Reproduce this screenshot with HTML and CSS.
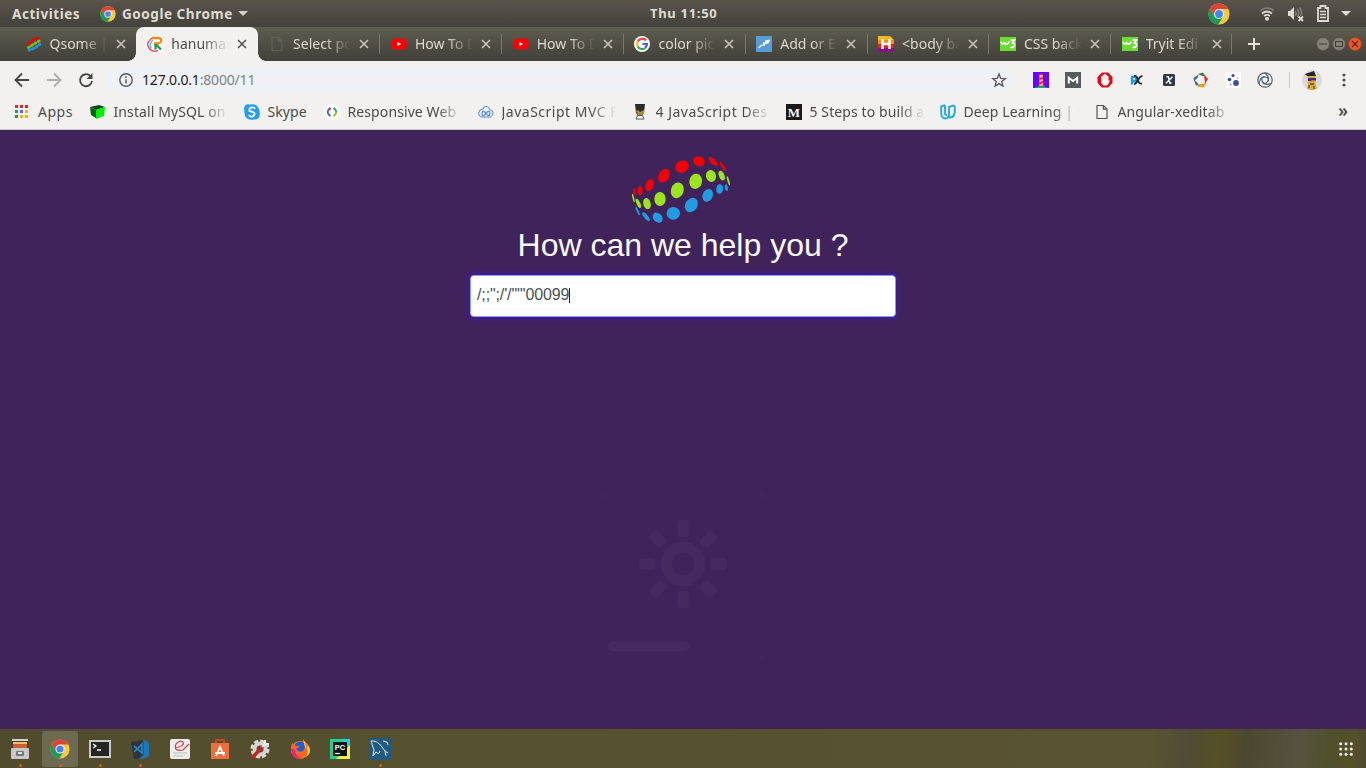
FILE: index.html
```html
<!DOCTYPE html>
<html lang="en">
<head>
<meta charset="utf-8">
<title>How can we help you ?</title>
<link rel="stylesheet" href="styles.css">
</head>
<body>
<svg class="defs" width="0" height="0">
  <symbol id="chrome" viewBox="0 0 48 48">
    <circle cx="24" cy="24" r="23" fill="#fbc940"/>
    <path d="M4 12.500A23 23 0 0 0 22.500 47L33 30 15 30Z" fill="#1a9b58"/>
    <path d="M24 13H44.200A23 23 0 0 0 4 12.500L14 29Z" fill="#dc4437"/>
    <circle cx="24" cy="24" r="11" fill="#f5f5f5"/><circle cx="24" cy="24" r="8.600" fill="#4387f4"/>
  </symbol>
  <symbol id="close" viewBox="0 0 10 10"><path d="M1 1 9 9M9 1 1 9" stroke="currentColor" stroke-width="1.6" fill="none"/></symbol>
  <symbol id="youtube" viewBox="0 0 16 16"><rect x="1" y="2.500" width="14.500" height="11" rx="2.500" fill="#f00"/><path d="M6.500 6v4l3.700-2Z" fill="#fff"/></symbol>
  <symbol id="w3" viewBox="0 0 16 16"><path d="M0 1H16V15H0Z" fill="#6bdb33"/><path d="M1 5.500c.3 3 3.300 3 3.700.5.300 3 3.300 3 4.500-.5M10.500 4.200h4L12.400 7c3.700 0 2.700 5-1.900 4.200" fill="none" stroke="#fff" stroke-width="1.700"/></symbol>
  <symbol id="page" viewBox="0 0 16 16"><path d="M3 1.500H9.500L13 5V14.500H3ZM9.300 1.500V5.200H13" fill="none" stroke="currentColor" stroke-width="1.200"/></symbol>
</svg>

<header class="topbar">
  <span class="activities">Activities</span>
  <svg class="app-icon" width="16" height="16"><use href="#chrome"/></svg>
  <span class="app-name">Google Chrome</span>
  <svg class="app-caret" width="10" height="5"><path d="M0 0H10L5 5Z" fill="#d5d1cc"/></svg>
  <span class="clock">Thu 11:50</span>
  <div class="status">
    <svg width="22" height="22"><use href="#chrome"/></svg>
    <svg class="wifi" width="16" height="15" viewBox="0 0 16 15"><g fill="none" stroke="#dfdbd2" stroke-width="1.700"><path d="M1.500 4.500Q8-.5 14.500 4.500" opacity=".35"/><path d="M3 7.500Q8 3.500 13 7.500M5 10Q8 7.800 11 10"/></g><circle cx="8" cy="12.700" r="2" fill="#dfdbd2"/></svg>
    <svg class="sound" width="18" height="16" viewBox="0 0 18 16"><path d="M1 5H3L7 1V14L3 10H1Z" fill="#dfdbd2"/><g fill="none" stroke="#dfdbd2" opacity=".4" stroke-width="1.300"><path d="M8.500 5Q10 7.500 8.500 10M10.500 3Q13 7 10.500 11M12.500 1.500Q16 6 13.500 10"/></g><path d="m11.500 10.500 4.500 4.500m0-4.500-4.500 4.500" stroke="#dfdbd2" stroke-width="1.800"/></svg>
    <svg class="battery" width="12" height="17" viewBox="0 0 12 17"><path d="M1 3H3.500V1H8.500V3H11V16H1Z" fill="none" stroke="#dfdbd2" stroke-width="1.800"/><path d="M3 6.500H9M3 9.500H9M3 12.500H9" stroke="#dfdbd2" stroke-width="1.500"/></svg>
    <svg width="10" height="5"><path d="M0 0H10L5 5Z" fill="#dfdbd2"/></svg>
  </div>
</header>

<nav class="tabs">
  <div class="tab"><svg width="16" height="16" viewBox="0 0 16 16"><g fill="none" stroke-width="3" stroke-linecap="round" stroke-dasharray="1 2.800"><path d="M2 9 6 4.500 13 2" stroke="#e00808"/><path d="M2.500 11.500 8 8 14 4.500" stroke="#76bd22"/><path d="M3 14 9 12 14 8" stroke="#2590d3"/></g></svg><span class="fade">Qsome |</span><svg class="x"><use href="#close"/></svg></div>
  <div class="tab active"><svg width="16" height="16" viewBox="0 0 16 16"><path d="M0 0H16V16H0Z" fill="#fff"/><path d="M11 14.500Q5 16.500 2 12T3 4L5 2" stroke="#e54a60" stroke-width="1.400" fill="none"/><path d="M4 12Q2 7 6 4" stroke="#63a9e0" stroke-width="1.300" fill="none"/><path d="M5 2H11.500C15.500 2.500 15 7 11 7.500H7" stroke="#f38b13" stroke-width="2.300" fill="none"/><path d="M8.500 8v5.500M9.500 9l4.500 4.500" stroke="#1b9a45" stroke-width="2.200"/></svg><span class="fade">hanumar</span><svg class="x"><use href="#close"/></svg></div>
  <div class="tab"><svg class="dark-page" width="16" height="16"><use href="#page"/></svg><span class="fade">Select po</span><svg class="x"><use href="#close"/></svg></div>
  <div class="tab sep"><svg width="16" height="16"><use href="#youtube"/></svg><span class="fade">How To D</span><svg class="x"><use href="#close"/></svg></div>
  <div class="tab sep"><svg width="16" height="16"><use href="#youtube"/></svg><span class="fade">How To D</span><svg class="x"><use href="#close"/></svg></div>
  <div class="tab sep"><svg width="16" height="16" viewBox="0 0 16 16"><circle cx="8" cy="8" r="8" fill="#fff"/><g fill="none" stroke-width="2.200"><path d="M12 4.500A5 5 0 0 0 3.700 5.500" stroke="#ea4335"/><path d="M3.700 5.500a5 5 0 0 0 0 5" stroke="#fbbc05"/><path d="M3.700 10.500a5 5 0 0 0 7.500 1.500" stroke="#34a853"/><path d="M11.200 12Q13 10 13 8H8.500" stroke="#4f5bea"/></g></svg><span class="fade">color pic</span><svg class="x"><use href="#close"/></svg></div>
  <div class="tab sep"><svg width="16" height="16" viewBox="0 0 16 16"><path d="M0 0H16V16H0Z" fill="#5b9bd5"/><path d="m1.500 12.500 3.500-4 2 .500 0-3 2 .7V4.500l5.500-1-2 4-3 .2-1 2-2.500 0-1 1.300Z" fill="#fff"/></svg><span class="fade">Add or E</span><svg class="x"><use href="#close"/></svg></div>
  <div class="tab sep"><svg width="16" height="16" viewBox="0 0 16 16"><path d="M0 0H12L16 4H0Z" fill="#fbb723"/><path d="M0 4H16V8H0Z" fill="#f38a20"/><path d="M0 8H16V12H0Z" fill="#d9232e"/><path d="M0 12H16V16H0Z" fill="#85137e"/><path d="M4.500 3V13M11.500 3V13M4.500 8H11.500" stroke="#fff" stroke-width="2.500"/></svg><span class="fade">&lt;body ba</span><svg class="x"><use href="#close"/></svg></div>
  <div class="tab sep"><svg width="16" height="16"><use href="#w3"/></svg><span class="fade">CSS back</span><svg class="x"><use href="#close"/></svg></div>
  <div class="tab sep last"><svg width="16" height="16"><use href="#w3"/></svg><span class="fade">Tryit Edi</span><svg class="x"><use href="#close"/></svg></div>
  <svg class="plus" width="12" height="12"><path d="M6 0V12M0 6H12" stroke="#e6e3da" stroke-width="2"/></svg>
  <div class="window-buttons">
    <svg width="14" height="14" viewBox="0 0 14 14"><circle cx="7" cy="7" r="6.500" fill="#858279" stroke="#55534b"/><path d="M3 7H11" stroke="#3c3b37"/></svg>
    <svg width="14" height="14" viewBox="0 0 14 14"><circle cx="7" cy="7" r="6.500" fill="#858279" stroke="#55534b"/><path d="M3.500 4.500H10.500V9.500H3.500Z" stroke="#3c3b37" fill="none"/></svg>
    <svg width="14" height="14" viewBox="0 0 14 14"><circle cx="7" cy="7" r="6.500" fill="#f15a22" stroke="#a83f13"/><path d="m4 4 6 6m0-6-6 6" stroke="#512310" stroke-width="1.200"/></svg>
  </div>
</nav>

<section class="toolbar">
  <svg class="nav-icons" width="84" height="16" viewBox="0 0 84 16"><g fill="none" stroke-width="1.800"><path d="M15 8H2M8 1.500 1.500 8 8 14.500" stroke="#454545"/><path d="M33 8H46M40 1.500 46.500 8 40 14.500" stroke="#adadab"/><path d="M76.500 4.200A6 6 0 1 0 78 9" stroke="#454545"/></g><path d="M78.500 1V7H72.500Z" fill="#454545"/></svg>
  <div class="omnibox">
    <svg width="14" height="14" viewBox="0 0 14 14"><circle cx="7" cy="7" r="6.200" fill="none" stroke="#55585c" stroke-width="1.400"/><path d="M7 6.200V10.500M7 3.200V5" stroke="#55585c" stroke-width="1.500"/></svg>
    <span class="url">127.0.0.1<i>:8000/11</i></span>
    <svg class="star" width="16" height="16" viewBox="0 0 16 16"><path d="m8 2 1.700 4.300 4.600.3-3.500 3 1.100 4.500L8 11.600 4.100 14.100l1.100-4.500-3.500-3 4.600-.3Z" fill="none" stroke="#55585c" stroke-width="1.300"/></svg>
  </div>
  <div class="extensions">
    <svg viewBox="0 0 16 16"><path d="M0 0H16V16H0Z" fill="#6b00fb"/><path d="M1 16Q8 12 15 16Z" fill="#00b65b"/><path d="M6.500 3h3.200l.8 11H6Z" fill="#f4a179"/><path d="M6 3Q8 0 10 3Z M6.500 6 9.800 5V7L6.500 8Z M6.200 10.500l4-1.500v2l-4 1.500Z" fill="#e72c29"/><path d="M6.500 3h3.200v1.500H6.500Z" fill="#ffc72b"/></svg>
    <svg viewBox="0 0 16 16"><path d="M0 0H16V16H0Z" fill="#545c5f"/><path d="M3.800 11.500V5.800L8 9 12.200 5.800V11.500" fill="none" stroke="#fff" stroke-width="2"/></svg>
    <svg viewBox="0 0 16 16"><path d="M5 .5H11L15.500 5V11L11 15.500H5L.5 11V5Z" fill="#e30613"/><path d="M4.200 4H5.700V2.800H7.200V2H8.700V2.800H10.200V4H11.500V9L13 8 11.500 12 10 13.500H6.500L4.200 11Z" fill="#fff"/><path d="M5.900 4V8M7.700 3V8M9.500 4V8" stroke="#efb9bc" stroke-width=".6"/></svg>
    <svg viewBox="0 0 16 16"><path d="M3 12.500V5H6Q9 7 6 9H3.500" fill="none" stroke="#1a9be8" stroke-width="2.400"/><path d="M5 4Q8 3.500 9 8T13 11.500M13.500 4Q11 4 9 8T5 12" fill="none" stroke="#242424" stroke-width="1.700"/></svg>
    <svg viewBox="0 0 16 16"><rect x="2" y="2" width="12" height="12" rx="1.500" fill="#30394a"/><path d="M5.500 4.800H7.300L9 11.200H10.500M11.500 4.800 5 11.200" fill="none" stroke="#fff" stroke-width="1.400"/></svg>
    <svg viewBox="0 0 16 16"><path d="m5 2 5-1.500 2 4-4-1Z" fill="#24814b"/><path d="m11 2 4 5-3 5-.5-5Z" fill="#d92f3a"/><path d="m13 11-2 4.500-6-.5 1-2.500Z" fill="#f19b20"/><path d="m6.500 14-4-1L1 8l3 2Z" fill="#45756e"/><path d="M5.500 2.500.5 6 1 9l3.500-3Z" fill="#3b66a2"/></svg>
    <svg viewBox="0 0 16 16"><path d="M0 0H16V16H0Z" fill="#fff"/><g fill="#3b4bab"><circle cx="8" cy="3.500" r="1.600"/><circle cx="4.500" cy="7.500" r="1.800"/><circle cx="11" cy="11" r="2.900"/><circle cx="12.500" cy="6" r=".8" opacity=".5"/><circle cx="5.500" cy="12.500" r=".9" opacity=".6"/></g></svg>
    <svg viewBox="0 0 16 16"><g fill="none" stroke="#586374" stroke-width="1.200"><circle cx="8" cy="8" r="7.200"/><path d="M2 12Q3 4.500 8 5T11 9.500"/><path d="M2 12Q3 4.500 8 5T11 9.500" transform="rotate(120 8 8)"/><path d="M2 12Q3 4.500 8 5T11 9.500" transform="rotate(240 8 8)"/></g></svg>
  </div>
  <i class="divider"></i>
  <svg class="avatar" width="20" height="20" viewBox="0 0 20 20"><circle cx="10" cy="10" r="10" fill="#d9d9dc"/><path d="M5.500 6H13.500V14L15 19Q10 21 5 19L6 15Z" fill="#d5ac3c"/><path d="M3 4 6 3 12 1 14 6H5Z" fill="#242328"/><path d="M6 8H14V10.500H11L10 10 9 11H6Z" fill="#4b297e"/><path d="M8 14H12M7 18V15M12 19V16" stroke="#704b20" stroke-width="1.300"/></svg>
  <svg class="more" width="4" height="14"><g fill="#505050"><circle cx="2" cy="2" r="1.600"/><circle cx="2" cy="7" r="1.600"/><circle cx="2" cy="12" r="1.600"/></g></svg>
</section>

<nav class="bookmarks">
  <div class="bm apps"><svg viewBox="0 0 16 16"><path d="M1 1h3v3H1ZM6 1h3v3H6ZM11 1h3v3h-3Z" fill="#e22"/><path d="M1 6h3v3H1Z" fill="#17a15a"/><path d="M6 6h3v3H6Z" fill="#5561ef"/><path d="M11 6h3v3h-3ZM6 11h3v3H6ZM11 11h3v3h-3Z" fill="#f4b400"/><path d="M1 11h3v3H1Z" fill="#17a15a"/></svg><span>Apps</span></div>
  <div class="bm"><svg viewBox="0 0 16 16"><path d="M0 3 9 1 15 3 6 6Z" fill="#064c19"/><path d="M0 3 6 6V14L1 11Z" fill="#07601b"/><path d="M6 6 15 3 14 12 6 15Z" fill="#00f000"/></svg><span class="fade">Install MySQL on</span></div>
  <div class="bm skype"><svg viewBox="0 0 16 16"><path d="M0 4Q1-1 6 .5 14-1 15.500 7 17 16 10 15.500 1 17 .5 9Z" fill="#249cef"/><path d="M11 5Q10 3 7.500 3.500T5.500 7L9 8.200Q12 9.500 9.500 11.700T5 11" fill="none" stroke="#fff" stroke-width="1.800"/></svg><span>Skype</span></div>
  <div class="bm"><svg viewBox="0 0 16 16"><circle cx="8" cy="8" r="8" fill="#fff"/><g fill="none" stroke-width="2"><path d="M6.500 4Q4.500 5 3.500 8" stroke="#5960ed"/><path d="M3.500 8Q4.500 11 6.500 12" stroke="#4067df"/><path d="M9.500 4Q11.500 5 12.500 8" stroke="#37a955"/><path d="M12.500 8Q11.500 11 9.500 12" stroke="#a0bb20"/><path d="M6.500 4 5 6" stroke="#e33e35"/></g></svg><span class="fade">Responsive Web</span></div>
  <div class="bm js"><svg viewBox="0 0 16 16"><path d="M4 13H12.500Q16 11 15 8 14 6 12 6 10 1 6 3L5 5Q1 5 .7 9T4 13Z" fill="#edf4ff" stroke="#5286ec"/><path d="M8 9.500C6 6.500 4 7 4 9.500s2 3 4 0 4-2.500 4 0-2 3-4 0Z" fill="none" stroke="#5286ec" stroke-width="1.200"/></svg><span class="fade">JavaScript MVC F</span></div>
  <div class="bm js"><svg viewBox="0 0 16 16"><path d="M3 0H13L12 9 10.500 11H5.500L4 9Z" fill="#2c2c2b"/><path d="M4 7Q6 5 8 8L12 6V9L10 11H6Z" fill="#a79337"/><path d="M5.500 11.500H10.500L12 15H4Z" fill="#fff" stroke="#555"/></svg><span class="fade">4 JavaScript Des</span></div>
  <div class="bm"><svg viewBox="0 0 16 16"><path d="M0 0H16V16H0Z" fill="#191919"/><text x="8" y="12.500" text-anchor="middle" class="medium">M</text></svg><span class="fade">5 Steps to build a</span></div>
  <div class="bm"><svg viewBox="0 0 16 16"><path d="M5 1.200 1.200 2.500V9Q1.500 14.500 5.500 14.500 9 14 9 10V5M5 1.200V9Q5 11 7 11M9 10V3L13 1.500 14.800 2.500V8Q14 14 9 13.500" fill="none" stroke="#24a9e5" stroke-width="1.900"/></svg><span class="fade">Deep Learning | U</span></div>
  <div class="bm"><svg class="page-dark" viewBox="0 0 16 16"><use href="#page"/></svg><span class="fade">Angular-xeditab</span></div>
  <span class="overflow">»</span>
</nav>

<main class="page">
  <svg class="logo" width="120" height="85" viewBox="0 0 360 255">
    <g fill="#f30000"><ellipse cx="44" cy="140" rx="4" ry="10" transform="rotate(-8 44 140)"/><ellipse cx="60" cy="137" rx="8" ry="13"/><ellipse cx="89" cy="120" rx="12" ry="19" transform="rotate(22 89 120)"/><ellipse cx="132" cy="92" rx="16" ry="22" transform="rotate(32 132 92)"/><ellipse cx="186" cy="65" rx="21" ry="18" transform="rotate(-28 186 65)"/><ellipse cx="237" cy="49" rx="18" ry="15" transform="rotate(22 237 49)"/><ellipse cx="279" cy="49" rx="17" ry="8" transform="rotate(46 279 49)"/><ellipse cx="309" cy="65" rx="16" ry="4" transform="rotate(57 309 65)"/></g>
    <g fill="#9be51e"><ellipse cx="40" cy="159" rx="2.500" ry="13" transform="rotate(-14 40 159)"/><ellipse cx="55" cy="175" rx="5.500" ry="15" transform="rotate(-25 55 175)"/><ellipse cx="81" cy="176" rx="11" ry="17" transform="rotate(-16 81 176)"/><ellipse cx="120" cy="162" rx="17" ry="21"/><ellipse cx="172" cy="136" rx="19" ry="24" transform="rotate(18 172 136)"/><ellipse cx="227" cy="109" rx="19" ry="23" transform="rotate(12 227 109)"/><ellipse cx="273" cy="93" rx="15" ry="18" transform="rotate(-15 273 93)"/><ellipse cx="305" cy="92" rx="8" ry="15" transform="rotate(-23 305 92)"/><ellipse cx="325" cy="107" rx="3" ry="14" transform="rotate(-16 325 107)"/></g>
    <g fill="#219ce2"><ellipse cx="53" cy="198" rx="3" ry="14" transform="rotate(-25 53 198)"/><ellipse cx="78" cy="215" rx="6" ry="16" transform="rotate(-40 78 215)"/><ellipse cx="113" cy="218" rx="13" ry="17" transform="rotate(-45 113 218)"/><ellipse cx="160" cy="205" rx="20" ry="19"/><ellipse cx="214" cy="180" rx="18" ry="23" transform="rotate(32 214 180)"/><ellipse cx="263" cy="151" rx="15" ry="20" transform="rotate(25 263 151)"/><ellipse cx="299" cy="132" rx="10" ry="14" transform="rotate(5 299 132)"/><ellipse cx="319" cy="128" rx="4.500" ry="10" transform="rotate(-10 319 128)"/></g>
  </svg>
  <h1>How can we help you ?</h1>
  <div class="search"><span>/;;";/'/""'00099</span><i class="caret"></i></div>
  <svg class="watermark" width="190" height="190" viewBox="0 0 570 570" fill="#45295f">
    <circle cx="279" cy="252" r="50" fill="none" stroke="#45295f" stroke-width="33"/>
    <g><rect x="263" y="120" width="33" height="51" rx="9"/><rect x="263" y="333" width="33" height="51" rx="9"/><rect x="147" y="235" width="50" height="34" rx="8"/><rect x="361" y="235" width="50" height="34" rx="8"/></g>
    <g transform="rotate(45 279 252)"><rect x="263" y="120" width="33" height="51" rx="9"/><rect x="263" y="333" width="33" height="51" rx="9"/><rect x="147" y="235" width="50" height="34" rx="8"/><rect x="361" y="235" width="50" height="34" rx="8"/></g>
    <rect x="53" y="485" width="244" height="29" rx="14"/>
    <g opacity=".25"><path d="M15 59 51 25V59ZM508 25 545 59H508ZM15 516H51V552ZM508 516H545L508 552Z"/></g>
  </svg>
</main>

<footer class="dock">
  <div class="app running"><svg viewBox="0 0 20 20"><path d="M2 0H18V11H2Z" fill="#45372c"/><path d="M2 0H18V2H2Z" fill="#d6d4cf"/><path d="M3 3H17V5H3Z" fill="#f7ba73"/><path d="M3 5H17V9H3Z" fill="#c9622c"/><rect x="1" y="9" width="18" height="11" rx="1" fill="#c9c8c5"/><rect x="6" y="12" width="8" height="5" rx="1" fill="#777"/><path d="M8 14H12" stroke="#fff" stroke-width="1.500"/></svg></div>
  <div class="app running selected"><svg viewBox="0 0 48 48"><use href="#chrome"/></svg></div>
  <div class="app running"><svg class="terminal" viewBox="0 0 22 18"><path d="M0 0H22V18H0Z" fill="#c9c9c6"/><path d="M2 2H20V16H2Z" fill="#252525"/><path d="m4 4 3 2-3 2M8 10H12" stroke="#fff" stroke-width="1.300" fill="none"/></svg></div>
  <div class="app running"><svg viewBox="0 0 20 20"><path d="M1 3 13 1V19L4 20Z" fill="#303337"/><path d="m13 0 6 4v13l-6 3-4-1 5-3V5Z" fill="#1f77bb"/><path d="m4 7 8 7V5L4 13" fill="none" stroke="#2188cf" stroke-width="1.700"/></svg></div>
  <div class="app"><svg viewBox="0 0 20 20"><rect width="20" height="20" rx="2" fill="#eeeeec"/><path d="M5 9Q15 7 13 3.500T6 5Q3 13 13 11L19 5" fill="none" stroke="#dc3e48" stroke-width="1.200"/><path d="M3 14H17M3 17H13" stroke="#bbb"/></svg></div>
  <div class="app"><svg viewBox="0 0 20 20"><path d="M6 5V1H14V5" fill="none" stroke="#bd4b28" stroke-width="2"/><path d="M1 4H19V20H1Z" fill="#ed6d3c"/><path d="M6 17 10 8 14 17M5 14H15" fill="none" stroke="#fff" stroke-width="1.800"/></svg></div>
  <div class="app"><svg viewBox="0 0 20 20"><circle cx="10" cy="10" r="7.500" fill="none" stroke="#ddddda" stroke-width="4" stroke-dasharray="3.900 2"/><circle cx="10" cy="10" r="5.500" fill="none" stroke="#d5d5d2" stroke-width="4"/><path d="m3 18 9-10" stroke="#bc2828" stroke-width="3.500" stroke-linecap="round"/><path d="m12 8 3-3 0-4m0 4h4" stroke="#ebebe8" stroke-width="2" fill="none"/></svg></div>
  <div class="app"><svg viewBox="0 0 20 20"><circle cx="10" cy="11" r="9" fill="#ff9c16"/><circle cx="10" cy="9" r="6.500" fill="#275cca"/><path d="M2 4 6 7Q9 6 9 8L6 10Q9 14 13 12 17 8 13 1 22 7 19 13 15 22 6 19 0 15 1 8Z" fill="#fa6726"/><path d="M13 0Q17 5 16 10 18 5 19 8 22 14 16 18 20 10 15 8Z" fill="#ffd33a"/><path d="M1 9Q1 20 11 20 5 16 5 11Z" fill="#ee237e"/></svg></div>
  <div class="app"><svg viewBox="0 0 20 20"><path d="M0 0H20V20H0Z" fill="#25cf91"/><path d="M12 0H20V20Z" fill="#28cce2"/><path d="M20 6V20H6Z" fill="#eef04b"/><path d="M3 3H17V17H3Z" fill="#111"/><text x="10" y="10.500" text-anchor="middle" class="pc">PC</text><path d="M5 14.500H10" stroke="#fff" stroke-width="1.200"/></svg></div>
  <div class="app running"><svg class="mysql" viewBox="0 0 22 22"><rect width="22" height="22" rx="2" fill="#235b80"/><path d="M2 3Q8 2 13 9L16 13 19 15M2 3 5 12 4 18 7 14Q10 17 11 13M16 13 17 18M14 3 18 4 19 7" fill="none" stroke="#d9e9ef" stroke-width="1"/></svg></div>
  <svg class="grid" width="14" height="14" viewBox="0 0 14 14"><g fill="#f0eee7"><circle cx="1.700" cy="1.700" r="1.500"/><circle cx="7" cy="1.700" r="1.500"/><circle cx="12.300" cy="1.700" r="1.500"/><circle cx="1.700" cy="7" r="1.500"/><circle cx="7" cy="7" r="1.500"/><circle cx="12.300" cy="7" r="1.500"/><circle cx="1.700" cy="12.300" r="1.500"/><circle cx="7" cy="12.300" r="1.500"/><circle cx="12.300" cy="12.300" r="1.500"/></g></svg>
</footer>
</body>
</html>
```
FILE: styles.css
```css
* { box-sizing: border-box; }
body { margin: 0; width: 1366px; height: 768px; overflow: hidden; display: flex; flex-direction: column; background: #40235b; font: 14px "Noto Sans", sans-serif; }
svg { display: block; flex: none; }
.defs { position: absolute; }

.topbar { height: 27px; flex: none; display: grid; grid-template-columns: 80px 16px 120px 10px 1fr auto; align-items: center; background: linear-gradient(#59544c, #44423c); color: #dfdbd2; font-weight: 700; font-size: 13.500px; letter-spacing: .55px; padding-right: 15px; white-space: nowrap; position: relative; }
.activities { padding-left: 12px; }
.topbar .app-icon { margin-left: 20px; overflow: visible; }
.topbar .app-name { margin-left: 26px; }
.topbar .app-caret { margin-left: 22px; overflow: visible; }
.clock { position: absolute; left: 650px; top: 4px; font-size: 13px; line-height: 18px; letter-spacing: .7px; }
.status { grid-column: 6; display: flex; align-items: center; }
.wifi { margin-left: 29px; }
.sound { margin-left: 12px; }
.battery { margin-left: 12px; margin-right: 12px; }

.tabs { height: 34px; flex: none; display: flex; align-items: center; padding-left: 14px; background: linear-gradient(#5d5d50, #41403a); color: #dcd9ce; }
.tab { width: 121.800px; height: 34px; display: flex; align-items: center; padding-left: 11.500px; position: relative; }
.tab .fade { width: 58px; margin-left: 8px; padding-bottom: 2px; }
.tab .x { width: 10px; height: 10px; margin-left: 8px; color: #c8c5bb; }
.tab.active { background: #f2f1f0; color: #4c4c4c; border-radius: 8px 8px 0 0; }
.tab.active .x { color: #555; }
.tab.active::before, .tab.active::after { content: ""; position: absolute; bottom: 0; width: 8px; height: 8px; }
.tab.active::before { left: -8px; background: radial-gradient(circle at 0 0, transparent 7.500px, #f2f1f0 8px); }
.tab.active::after { right: -8px; background: radial-gradient(circle at 100% 0, transparent 7.500px, #f2f1f0 8px); }
.tab.sep { background: linear-gradient(#7b796e, #7b796e) 0 7px / 1px 20px no-repeat; }
.tab.last { background: linear-gradient(#7b796e, #7b796e) 0 7px / 1px 20px no-repeat, linear-gradient(#7b796e, #7b796e) 100% 7px / 1px 20px no-repeat; }
.dark-page { color: #62625a; }
.fade { overflow: hidden; white-space: nowrap; -webkit-mask-image: linear-gradient(to right, #000 calc(100% - 26px), transparent); mask-image: linear-gradient(to right, #000 calc(100% - 26px), transparent); }
.plus { margin-left: 16px; }
.window-buttons { margin-left: auto; margin-right: 4px; display: flex; gap: 2px; }

.toolbar { height: 38px; flex: none; background: #f2f1f0; display: flex; align-items: center; }
.nav-icons { margin-left: 14px; }
.omnibox { width: 906px; height: 28px; margin-left: 10px; border-radius: 14px; background: #eff1f4; display: flex; align-items: center; padding: 0 7px 0 11px; }
.url { margin-left: 9px; padding-bottom: 2px; color: #202124; font-size: 14px; letter-spacing: -.18px; }
.url i { color: #808387; font-style: normal; }
.star { margin-left: auto; }
.extensions { display: flex; gap: 16px; margin-left: 19px; }
.extensions svg { width: 16px; height: 16px; }
.divider { width: 1px; height: 16px; background: #c8c8c8; margin-left: 16px; }
.avatar { margin-left: 12px; }
.more { margin-left: 20px; }

.bookmarks { height: 31px; flex: none; background: #f2f1f0; border-bottom: 1px solid #c9c9c9; color: #4c4c4c; display: flex; padding: 0 0 4px 14px; align-items: center; }
.bm { width: 154px; display: flex; align-items: center; gap: 8px; white-space: nowrap; }
.bm span { padding-bottom: 2px; letter-spacing: .1px; }
.bm svg { width: 16px; height: 16px; }
.bm .fade { width: 115px; }
.bm.apps { width: 75.500px; }
.bm.apps span { letter-spacing: .5px; }
.bm.skype { width: 80px; }
.bm.js span { letter-spacing: .5px; }
.medium { font: bold 13px "Liberation Serif", serif; fill: #fff; }
.page-dark { color: #555; }
.overflow { margin-left: auto; margin-right: 18px; padding-bottom: 3px; font-size: 17px; font-weight: 600; }

.page { height: 599px; flex: none; display: flex; flex-direction: column; align-items: center; background: #40235b; }
.logo { margin: 15px 6px 0 0; }
h1 { margin: -4px 0 0; font: 32px/38px "Liberation Sans", sans-serif; color: #f8f9fa; }
.search { width: 426px; height: 42px; margin-top: 11px; padding: 0 0 2px 6px; display: flex; align-items: center; border: 1px solid #7da1fb; border-radius: 4px; background: #fff; box-shadow: 0 0 4px 2px #4a1899; color: #495057; font: 16px "Liberation Sans", sans-serif; }
.search span { white-space: pre; letter-spacing: -.12px; }
.caret { width: 1px; height: 15px; background: #222; }
.watermark { margin: 163px 0 0 4px; }

.dock { height: 39px; flex: none; display: flex; align-items: center; background: linear-gradient(97deg, #504b2d 0, #55512f 30%, #56512f 50%, #595333 84%, #504b35 87%, #565025 89%, #4b482f 91%, #57523f 95%, #50502e 97%, #545029 99%, #4d4832 100%); }
.app { width: 36px; height: 36px; margin: 0 2px; position: relative; display: flex; align-items: center; justify-content: center; border-radius: 3px; }
.app svg { width: 20px; height: 20px; }
.app .terminal { width: 22px; height: 18px; }
.app .mysql { width: 22px; height: 22px; }
.app.selected { background: #6c6b51; }
.app.running::after { content: ""; position: absolute; bottom: 0; left: 16.500px; width: 3px; height: 3px; border-radius: 50%; background: #e95420; }
.grid { margin-left: auto; margin-right: 13px; }
.pc { font: bold 7.500px "Liberation Sans", sans-serif; fill: #fff; }
```
